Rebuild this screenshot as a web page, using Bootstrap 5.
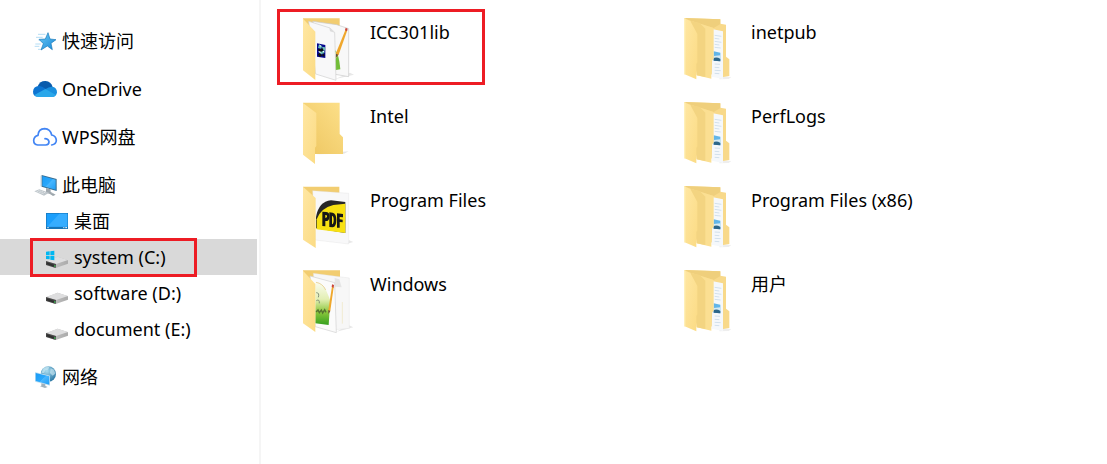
<!DOCTYPE html>
<html lang="zh-CN">
<head>
<meta charset="utf-8">
<meta name="viewport" content="width=device-width, initial-scale=1">
<title>system (C:)</title>
<link href="https://cdn.jsdelivr.net/npm/bootstrap@5.3.0/dist/css/bootstrap.min.css" rel="stylesheet">
<style>
  body { font-family: "Noto Sans", "Noto Sans CJK SC", sans-serif; font-size: 18px; line-height: 24px; color: #000; background: #fff; }
  a { color: inherit; text-decoration: none; }
  .tree-pane { width: 261px; padding-top: 23px; border-right: 2px solid #f5f5f5; }
  .tree-pane .group { margin-bottom: 12px; }
  .tree-row { height: 36px; margin-right: 2px; padding-left: 32px; gap: 4px; }
  .tree-row.child { padding-left: 44px; }
  .tree-row.active { background: #d9d9d9; }
  .tree-row svg { width: 26px; height: 24px; flex: none; }
  .marker { position: absolute; border: 3px solid #ed1c24; pointer-events: none; }
  .marker-row { left: 30px; right: 60px; top: -1px; bottom: -2px; }
  .marker-tile { left: 0; top: 0; bottom: 0; width: 208px; }
  .files { display: grid; grid-template-columns: repeat(auto-fill, 381px); grid-auto-rows: 76px; row-gap: 8px; padding: 9px 0 0 16px; align-content: start; }
  .tile { padding: 6px 0 0 17px; gap: 12px; }
  .tile svg { width: 64px; height: 68px; flex: none; }
  .tile .label { padding-top: 5px; }
</style>
</head>
<body>
<svg width="0" height="0" class="position-absolute" aria-hidden="true">
  <defs>
    <linearGradient id="flap" x1="0" y1="0" x2="1" y2="1"><stop offset="0" stop-color="#ffe7a3"/><stop offset="1" stop-color="#fbdb84"/></linearGradient>
    <linearGradient id="back" x1="0" y1="1" x2="1" y2="0"><stop offset="0" stop-color="#edc55f"/><stop offset="1" stop-color="#fde08a"/></linearGradient>
    <linearGradient id="screen" x1="0" y1="0" x2="1" y2="1"><stop offset="0" stop-color="#1b9bf5"/><stop offset=".5" stop-color="#2aa8fb"/><stop offset=".52" stop-color="#49b7ff"/><stop offset="1" stop-color="#1e9df5"/></linearGradient>
    <linearGradient id="star" x1="0" y1="0" x2="1" y2="1"><stop offset="0" stop-color="#6ccbf5"/><stop offset="1" stop-color="#1787d8"/></linearGradient>
    <linearGradient id="green" x1="0" y1="0" x2="0" y2="1"><stop offset="0" stop-color="#fbfcf0"/><stop offset=".4" stop-color="#e3efb4"/><stop offset=".7" stop-color="#8ac63c"/><stop offset="1" stop-color="#35a01e"/></linearGradient>
    <radialGradient id="globe" cx=".4" cy=".3" r=".8"><stop offset="0" stop-color="#a9dcf0"/><stop offset="1" stop-color="#1e6d9c"/></radialGradient>
    <linearGradient id="metal" x1="0" y1="0" x2="1" y2="0"><stop offset="0" stop-color="#c9c9c9"/><stop offset="1" stop-color="#ababab"/></linearGradient>
    <symbol id="drive" viewBox="72 18 78 72">
      <path d="M78 67 L113 53 L144 64 L144 74 L107 87 L78 77Z" fill="url(#metal)"/>
      <path d="M78 66 L113 53 L144 63 L108 75Z" fill="#dededf"/>
      <path d="M78 66 L108 75 L107 87 L78 78Z" fill="#4a4a4a"/>
      <path d="M80 70 L102 77 L102 83 L80 76Z" fill="#303030"/>
      <path d="M102 79h4v4h-4z" fill="#33b54a"/>
    </symbol>
    <symbol id="folder-full" viewBox="15 21 192 204">
      <path d="M150 205 L184 207 L176 213 L148 214Z" fill="#eee"/>
      <path d="M42 30 L151 34 L151 47 L168 50 L168 146 L178 154 L178 204 L160 207 L80 190 L42 195Z" fill="#f8d98a"/>
      <path d="M42 30 L151 34 L151 48 L131 60 L62 38Z" fill="#efcf7c"/>
      <path d="M129 64 L159 70 L159 213 L125 206Z" fill="#f5f8fb"/>
      <path d="M134 82l20 3M134 91l14 2M134 100l20 3M134 109l14 2M134 118l18 2M134 168l16 1M134 178l14 1M134 187l18 1M134 196l14 1" stroke="#bfd3e4" stroke-width="2"/>
      <path d="M131 130l20 4v26l-20-2z" fill="#62b5e8"/><path d="M131 144l20-2v10l-20-1z" fill="#d5eaf4"/><path d="M131 150q10-4 20 3v7l-20-2z" fill="#2d6689"/>
      <path d="M62 38 L131 60 L131 152 L124 160 L124 212 L80 202Z" fill="#fbdf92"/>
      <path d="M62 38 L89 45 L106 62 L106 207 L80 202Z" fill="#f3d481"/>
      <path d="M42 31 L61 39 L82 78 L82 163 L79 168 L79 214 L42 198Z" fill="url(#flap)"/>
      <path d="M42 31 L46 31 L46 200 L42 198Z" fill="#fff0b9"/>
    </symbol>
  </defs>
</svg>

<div class="d-flex min-vh-100">
  <nav class="tree-pane flex-shrink-0" aria-label="导航窗格">
    <div class="group">
      <a href="#" class="tree-row d-flex align-items-center">
        <svg viewBox="36 27 78 72" aria-hidden="true"><path d="M54 43h22M48 52h20M56 61h8M46 72h16M44 79h14M54 88h8" stroke="#8fcbee" stroke-width="2"/><path d="M84 38 L90 57 L108 59 L93 70 L97 89 L82 78 L63 90 L70 71 L57 58 L76 57Z" fill="url(#star)" stroke="#1879b8" stroke-width="2"/></svg>
        <span>快速访问</span></a>
    </div>
    <div class="group">
      <a href="#" class="tree-row d-flex align-items-center">
        <svg viewBox="36 171 78 72" aria-hidden="true"><path d="M53 199 Q60 182 77 183 Q93 184 98 201 L84 215 L54 207Z" fill="#0a5cad"/><path d="M52 230 Q39 228 39 215 Q40 199 57 198 Q65 198 84 211 L52 230Z" fill="#0d74d1"/><path d="M76 208 Q85 200 96 200 Q111 202 111 217 Q109 230 98 231Z" fill="#1a90df"/><path d="M43 225 L76 207 L108 225 Q104 231 96 231 L55 231 Q47 231 43 225Z" fill="#2aa7ea"/></svg>
        <span>OneDrive</span></a>
    </div>
    <div class="group">
      <a href="#" class="tree-row d-flex align-items-center">
        <svg viewBox="36 315 78 72" aria-hidden="true"><path d="M95 375 Q109 373 109 361 Q108 348 95 345 Q91 327 74 326 Q55 327 54 346 Q42 349 41 361 Q41 374 53 375 H77 Q87 374 87 365 Q85 356 75 356" fill="none" stroke="#4285f4" stroke-width="5" stroke-linecap="round" stroke-linejoin="round"/></svg>
        <span>WPS网盘</span></a>
    </div>
    <div class="group">
      <a href="#" class="tree-row d-flex align-items-center">
        <svg viewBox="36 24 78 72" aria-hidden="true"><path d="M65 30 L110 42 L110 78 L65 65Z" fill="#376b8e"/><path d="M67 33 L107 44 L107 74 L67 63Z" fill="url(#screen)"/><path d="M65 30 L62 32 L62 64 L65 65Z" fill="#a5bccb"/><path d="M78 69l14 4v8l8 4-8 3-14-5z" fill="#a0a8ae"/><path d="M43 79 L58 73 L87 83 L72 92Z" fill="#bdc5ca"/><path d="M50 79l22 8M55 76l23 8" stroke="#f5f6f7" stroke-width="2" stroke-dasharray="4 2"/><path d="M91 88l8-3 8 4-8 4z" fill="#9ba5ab"/></svg>
        <span>此电脑</span></a>
      <a href="#" class="tree-row child d-flex align-items-center">
        <svg viewBox="72 132 78 72" aria-hidden="true"><path d="M78 144h66v48H78z" fill="#1775b8"/><path d="M80 146h62v39H80z" fill="#1b9ffc"/><path d="M118 146h24v39H82z" fill="#36adff"/><path d="M82 188h4M130 188h3M136 188h5" stroke="#fff" stroke-width="3"/></svg>
        <span>桌面</span></a>
      <a href="#" class="tree-row child active position-relative d-flex align-items-center" aria-current="page">
        <svg viewBox="72 240 78 72" aria-hidden="true"><use href="#drive" x="72" y="240" width="78" height="72"/><path d="M78 260l11-1v11H78zM91 259l12-2v13H91zM78 272h11v11l-11-1zM91 272h12v14l-12-2z" fill="#00b7f1"/></svg>
        <span>system (C:)</span><span class="marker marker-row"></span></a>
      <a href="#" class="tree-row child d-flex align-items-center">
        <svg aria-hidden="true"><use href="#drive"/></svg>
        <span>software (D:)</span></a>
      <a href="#" class="tree-row child d-flex align-items-center">
        <svg aria-hidden="true"><use href="#drive"/></svg>
        <span>document (E:)</span></a>
    </div>
    <div class="group">
      <a href="#" class="tree-row d-flex align-items-center">
        <svg viewBox="36 270 78 72" aria-hidden="true"><circle cx="85" cy="297" r="23" fill="url(#globe)"/><path d="M70 280q8-6 18-4l-4 8-8 2-4 8-8 0zM92 280l10 4 4 12-8 6-8-8z" fill="#d3eef7" opacity=".6"/><path d="M45 291 L90 302 L90 332 L45 320Z" fill="#c9e4f3"/><path d="M47 294 L88 304 L88 329 L47 318Z" fill="url(#screen)"/><path d="M64 325l12 3v5l7 3-8 3-15-5 4-2z" fill="#9fb1bc"/></svg>
        <span>网络</span></a>
    </div>
  </nav>

  <main class="files flex-grow-1">
    <a href="#" class="tile position-relative d-flex align-items-start">
      <svg viewBox="72 45 192 204" aria-hidden="true">
        <path d="M194 238 L252 224 L240 218Z" fill="#e8e8e8"/>
        <path d="M99 55H209V80L190 200H99Z" fill="#f2cd70"/>
        <path d="M128 64 L200 74 L236 86 L236 230 L190 222Z" fill="#f8f8f8" stroke="#c9c9c9" stroke-width="2"/>
        <path d="M194 150Q206 156 211 208L194 211Z" fill="#72bd38"/><path d="M194 150l8 18-8 14z" fill="#cde79d"/>
        <path d="M227 88 L232 91 L206 164 L197 174 L198 159Z" fill="#efa72d"/><path d="M227 83l6 3-2 8-6-3z" fill="#c9453b"/><path d="M198 161l7 3-8 10z" fill="#62513f"/>
        <path d="M116 64 L180 84 L194 97 L198 241 L137 222Z" fill="#f8f8f9" stroke="#cfcfcf" stroke-width="2"/>
        <path d="M178 83l2 11 14 4z" fill="#dcdcdc"/>
        <path d="M141 130l25 5v39l-25-4z" fill="#05058e"/><path d="M147 133l9 5-2 8-10-2zM157 140l8 2v10l-9-3zM146 151l8 3 5-3 5 6-6 6-8-1z" fill="#69bdb5"/><path d="M144 146l8 2 5-4 4 7-7 4-9-2zM143 163l7-4 6 8-7 4zM158 160l6 4-2 6-5-3z" fill="#111"/><path d="M149 136l4 3M146 155l6 2M159 154l4 1" stroke="#fff" stroke-width="3"/>
        <path d="M99 56 L136 95 L136 240 L99 211Z" fill="url(#flap)"/>
      </svg>
      <span class="label">ICC301lib</span><span class="marker marker-tile"></span></a>
    <a href="#" class="tile d-flex align-items-start"><svg aria-hidden="true"><use href="#folder-full"/></svg><span class="label">inetpub</span></a>

    <a href="#" class="tile d-flex align-items-start">
      <svg viewBox="12 12 192 204" aria-hidden="true"><path d="M78 178 L176 169 L162 176Z" fill="#e6e6e6"/><path d="M39 23H149V117L159 127V177H39Z" fill="url(#back)"/><path d="M39 24 L79 54 V153 L75 158 V207 L39 179Z" fill="url(#flap)"/></svg>
      <span class="label">Intel</span></a>
    <a href="#" class="tile d-flex align-items-start"><svg aria-hidden="true"><use href="#folder-full"/></svg><span class="label">PerfLogs</span></a>

    <a href="#" class="tile d-flex align-items-start">
      <svg viewBox="12 9 192 204" aria-hidden="true"><path d="M172 191 L190 186 L176 180Z" fill="#e8e8e8"/><path d="M39 20H148V60H39Z" fill="#f2cd70"/><path d="M68 32 L176 40 V192 L76 180Z" fill="#f8f8f9" stroke="#dedede"/>
        <path d="M78 145V111Q86 65 123 61L166 66V159Z" fill="#272727"/><path d="M80 148V118Q92 84 130 75L166 71V159Z" fill="#f8e112"/>
        <path d="M97 138V95l12 1q12 2 9 17-2 12-12 10v16z" fill="#171717"/><path d="M106 105v9q5 0 5-5t-5-4z" fill="#f8e112"/><path d="M118 141V97l10 1q11 3 11 21 0 22-11 23z" fill="#171717"/><path d="M126 107v26q5-1 5-13 0-12-5-13z" fill="#f8e112"/><path d="M141 143V100l18 2v10l-10-1v7l9 1v8l-9-1v17z" fill="#171717"/>
        <path d="M39 20 L77 54 V204 L39 179Z" fill="url(#flap)"/></svg>
      <span class="label">Program Files</span></a>
    <a href="#" class="tile d-flex align-items-start"><svg aria-hidden="true"><use href="#folder-full"/></svg><span class="label">Program Files (x86)</span></a>

    <a href="#" class="tile d-flex align-items-start">
      <svg viewBox="12 15 192 204" aria-hidden="true"><path d="M140 209 L190 196 L174 188Z" fill="#e8e8e8"/><path d="M39 25H150V60H39Z" fill="#f2cd70"/><path d="M70 34 L178 48 V199 L135 203 L80 185Z" fill="#f7f7f7" stroke="#dedede"/><path d="M134 48l14 4 7 24-20-2z" fill="#e5e5e5"/><path d="M157 120v65" stroke="#eee5bf" stroke-width="2"/>
        <path d="M60 42 L134 62 L139 212 L76 194Z" fill="#fbfbfb" stroke="#d0d0d0" stroke-width="2"/>
        <path d="M76 60Q100 64 108 84L121 115L116 189L76 184Z" fill="url(#green)"/><path d="M78 61Q98 64 107 84" fill="none" stroke="#ead6a0" stroke-width="3"/><path d="M78 150l6-6 4 8 6-8 4 9 6-10 4 8" fill="none" stroke="#557330" stroke-width="4"/><path d="M79 92q10 0 6 14M79 116q10-6 9 8" fill="none" stroke="#829078" stroke-width="3"/>
        <path d="M126 73 L131 76 L121 146 L116 154 L115 143Z" fill="#efa72d"/><path d="M126 67l6 2-1 8-6-2z" fill="#c9453b"/><path d="M115 144l6 3-6 9z" fill="#62513f"/>
        <path d="M39 26 L76 66 V210 L39 184Z" fill="url(#flap)"/></svg>
      <span class="label">Windows</span></a>
    <a href="#" class="tile d-flex align-items-start"><svg aria-hidden="true"><use href="#folder-full"/></svg><span class="label">用户</span></a>
  </main>
</div>
<script src="https://cdn.jsdelivr.net/npm/bootstrap@5.3.0/dist/js/bootstrap.bundle.min.js"></script>
</body>
</html>
